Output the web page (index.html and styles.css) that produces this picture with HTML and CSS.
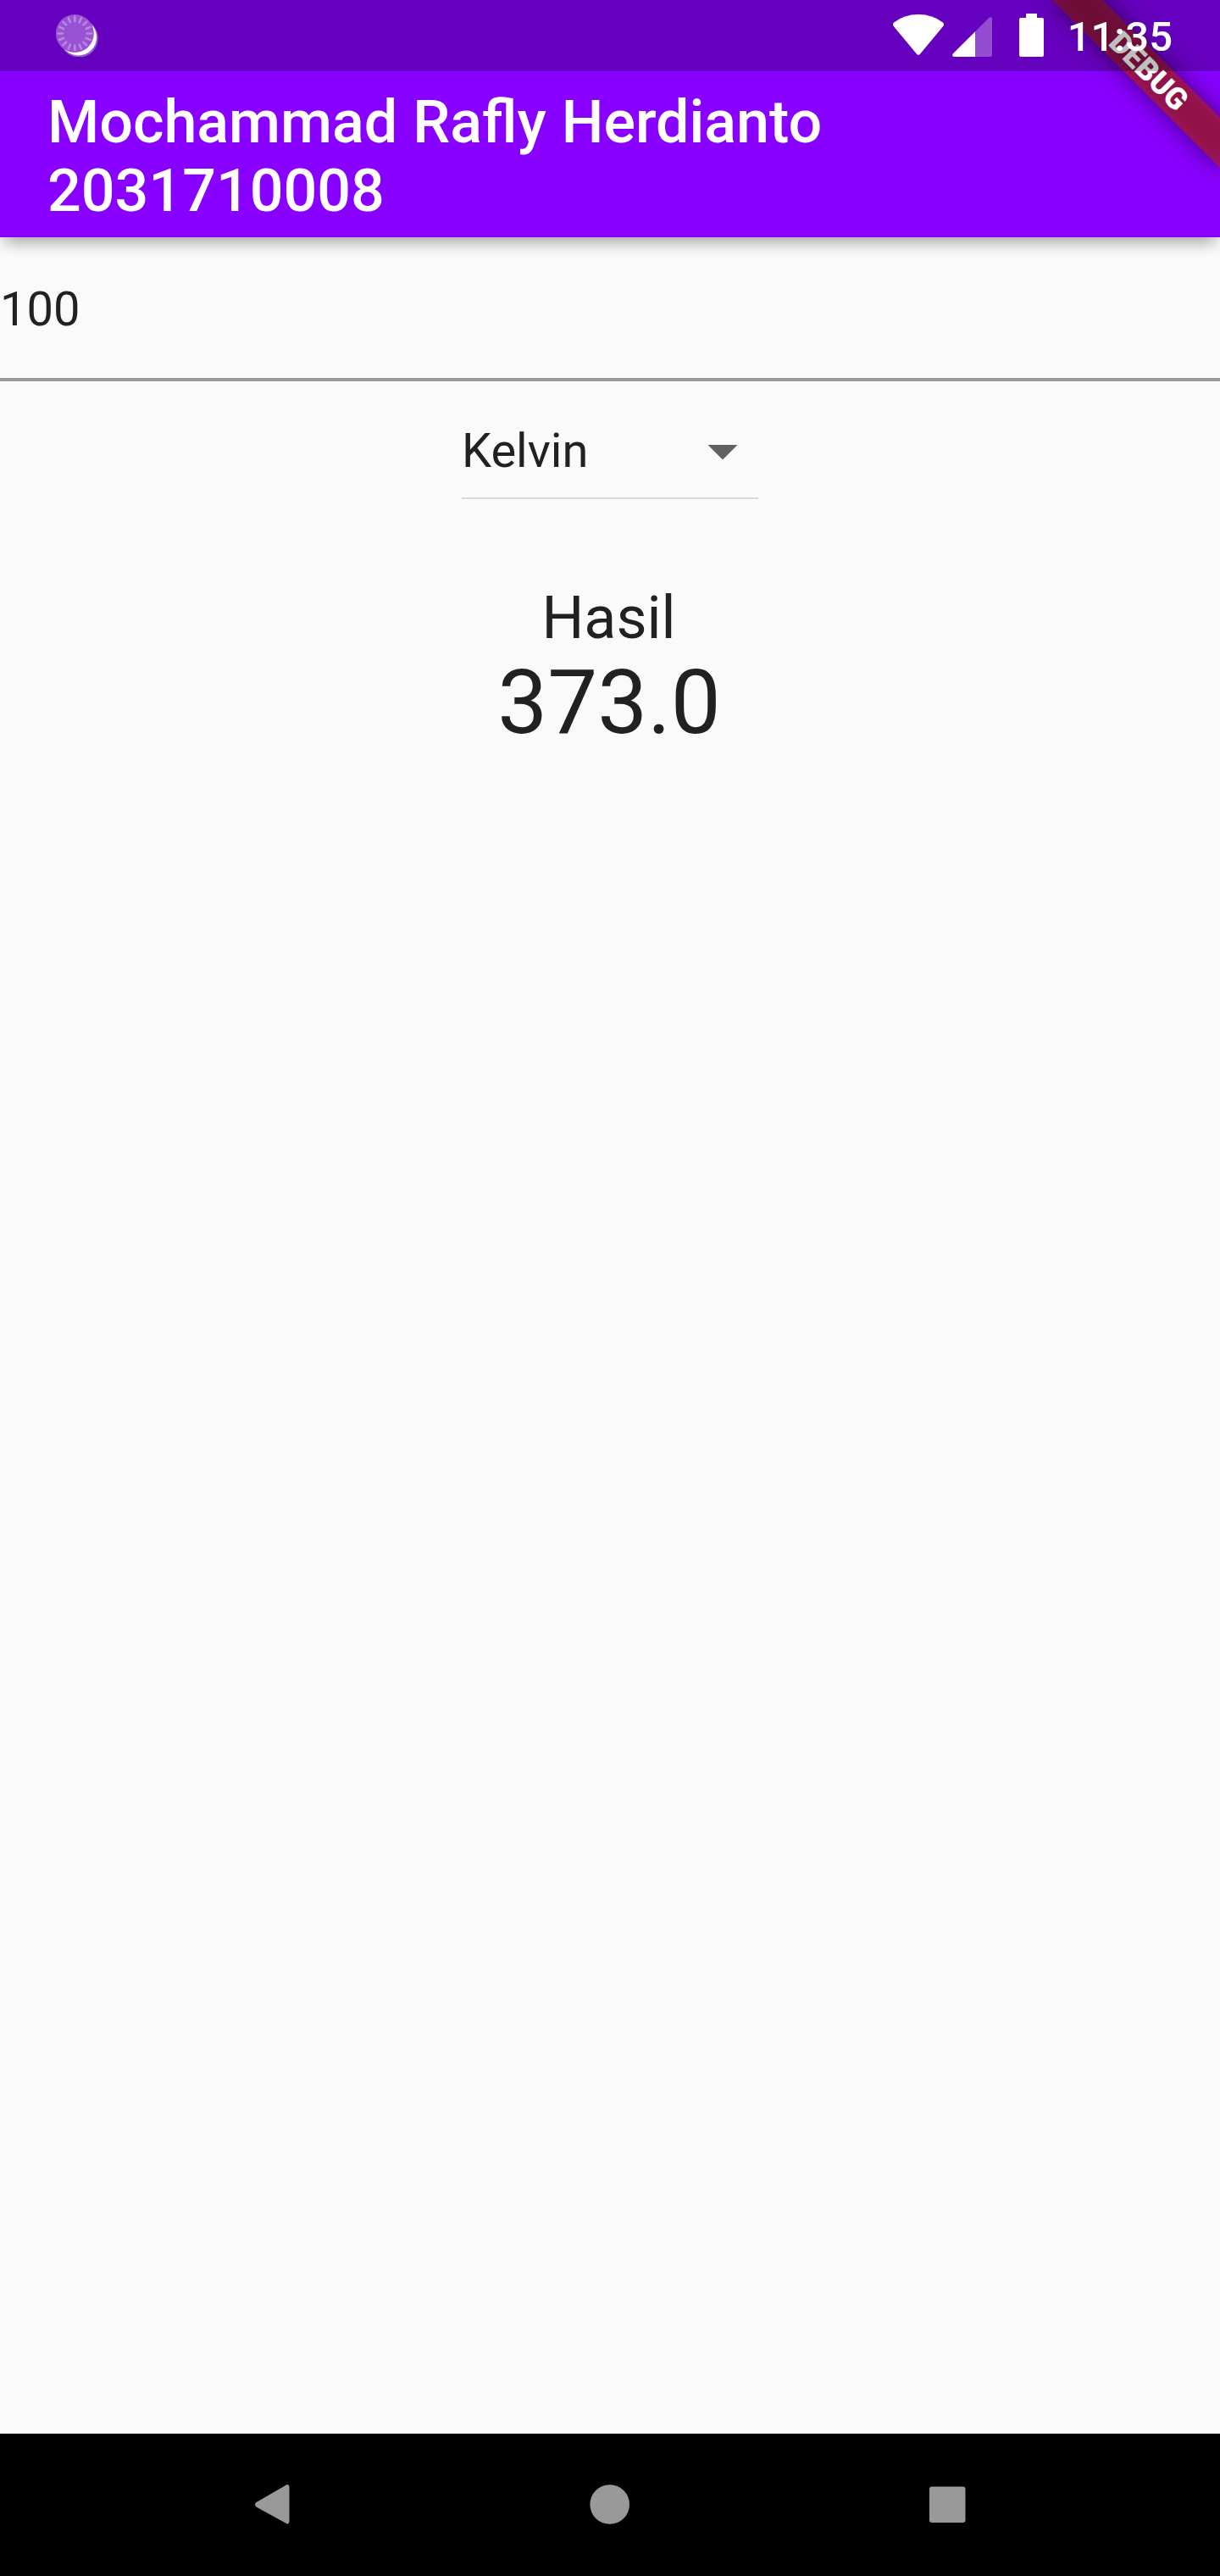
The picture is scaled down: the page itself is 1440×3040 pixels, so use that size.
FILE: index.html
```html
<!DOCTYPE html>
<html lang="id">
<head>
<meta charset="utf-8">
<title>Konverter Suhu</title>
<link rel="stylesheet" href="styles.css">
</head>
<body>
<div class="screen">
  <header class="app-bar">
    <h1 class="title">Mochammad Rafly Herdianto<br>2031710008</h1>
  </header>
  <main class="content">
    <div class="field">100</div>
    <div class="dropdown">
      <span>Kelvin</span>
      <svg class="arrow" viewBox="0 0 24 24"><path d="M7 10l5 5 5-5z"/></svg>
    </div>
    <div class="label">Hasil</div>
    <div class="result">373.0</div>
  </main>
  <nav class="nav-bar">
    <svg class="nav-icon" viewBox="0 0 60 60"><path d="M11.500 27 L47 6.500 Q50 5 50.500 9 V49.500 Q50 53.500 47 52 L11.500 32.500 Q8.500 29.700 11.500 27z"/></svg>
    <svg class="nav-icon" viewBox="0 0 60 60"><circle cx="29.700" cy="29.500" r="23.300"/></svg>
    <svg class="nav-icon" viewBox="0 0 60 60"><rect x="9" y="8.500" width="42.500" height="42.500" rx="3"/></svg>
  </nav>
  <div class="banner-corner"><div class="banner"><span>DEBUG</span></div></div>
  <div class="status-bar">
    <svg class="sync" viewBox="0 0 50 50">
      <circle cx="27.300" cy="28" r="22.500" fill="#fff" fill-opacity=".35"/>
      <circle cx="26.500" cy="27" r="21.500" fill="#fff"/>
      <circle cx="22.300" cy="22.500" r="22.500" fill="#9a52d4"/>
      <g stroke="#b888e0" stroke-width="2.600" stroke-linecap="round">
        <path id="t" d="M22.300 2.800v5.400M22.300 36.800v5.400M2.600 22.500h5.400M36.600 22.500h5.400"/>
        <use href="#t" transform="rotate(22.500 22.300 22.500)"/>
        <use href="#t" transform="rotate(45 22.300 22.500)"/>
        <use href="#t" transform="rotate(67.500 22.300 22.500)"/>
      </g>
    </svg>
    <div class="indicators">
      <svg class="wifi" viewBox="0 0 60 48"><path d="M1.200 9.500Q13 0 30 0T58.800 9.500Q61 11.500 59.200 14L32 46.800Q30 49 28 46.800L.8 14Q-1 11.500 1.200 9.500z"/></svg>
      <svg class="signal" viewBox="0 0 47 47"><path opacity=".3" d="M27 17.300L43.500.8Q47-1 47 2.500V44.500Q47 47 44.500 47H27z"/><path d="M27 17.300V47H2Q-1 46 .7 43.400z"/></svg>
      <svg class="battery" viewBox="0 0 29 51"><path d="M8 0h13v5h6q2 0 2 2v42q0 2-2 2H2q-2 0-2-2V7q0-2 2-2h6z"/></svg>
      <span class="clock">11:35</span>
    </div>
  </div>
</div>
</body>
</html>
```
FILE: styles.css
```css
* { box-sizing: border-box; }
body { margin: 0; background: #fafafa; font-family: Roboto, sans-serif; color: #212121; }
.screen { position: relative; width: 1440px; height: 3040px; overflow: hidden; display: flex; flex-direction: column; }
.app-bar {
  height: 280px; padding: 104px 56px 0; background: #8800ff; color: #fff;
  box-shadow: 0 14px 17px -7px rgba(0,0,0,.24), 0 4px 18px rgba(0,0,0,.12);
}
.title { margin: 0; font-size: 70px; line-height: 81px; font-weight: 500; word-spacing: .6px; }
.content { flex: 1; display: flex; flex-direction: column; align-items: center; }
.field { width: 100%; height: 170px; padding-top: 52px; border-bottom: 4px solid #9b9b9b; font-size: 56px; line-height: 66px; }
.dropdown {
  display: flex; justify-content: space-between; align-items: center;
  width: 350px; height: 139px; padding-bottom: 13px; padding-top: 40px;
  border-bottom: 2px solid #d9d9d9; font-size: 56px; line-height: 66px;
}
.arrow { width: 84px; height: 84px; fill: #616161; }
.label { margin-top: 99px; padding-right: 3px; font-size: 70px; line-height: 82px; }
.result { font-size: 105px; line-height: 123px; margin-top: -2px; padding-right: 2px; }
.nav-bar { height: 168px; background: #000; display: flex; justify-content: space-between; align-items: center; padding: 0 292px 0 291px; }
.nav-icon { width: 60px; height: 60px; fill: #999; }

/* Debug ribbon across the top right corner */
.banner-corner { position: absolute; top: 0; right: 0; width: 300px; height: 300px; overflow: hidden; }
.banner {
  position: absolute; left: 160px; top: 98px; width: 280px; height: 42px;
  transform: rotate(45deg); transform-origin: 140px -98px;
  display: flex; justify-content: center; align-items: center;
  color: #fff; font-size: 35.7px; line-height: 36px; font-weight: 900;
}
.banner::before { content: ""; position: absolute; inset: 0; background: rgba(0,0,0,.5); filter: blur(13.9px); }
.banner::after { content: ""; position: absolute; inset: 0; background: rgba(183,28,28,.63); }
.banner span { position: relative; z-index: 1; }

.status-bar {
  position: absolute; top: 0; left: 0; width: 1440px; height: 84px; padding: 0 56px 0 66px;
  display: flex; justify-content: space-between; background: rgba(0,0,0,.25); color: #fff;
}
.sync { width: 50px; height: 50px; margin-top: 17px; }
.indicators { display: flex; align-items: flex-start; fill: #fff; }
.wifi { width: 60px; height: 48px; margin: 17px 10px 0 0; }
.signal { width: 47px; height: 47px; margin: 20px 32px 0 0; }
.battery { width: 29px; height: 51px; margin: 16px 28px 0 0; }
.clock { margin-top: 15px; font-size: 49px; line-height: 58px; font-weight: 500; }
```
